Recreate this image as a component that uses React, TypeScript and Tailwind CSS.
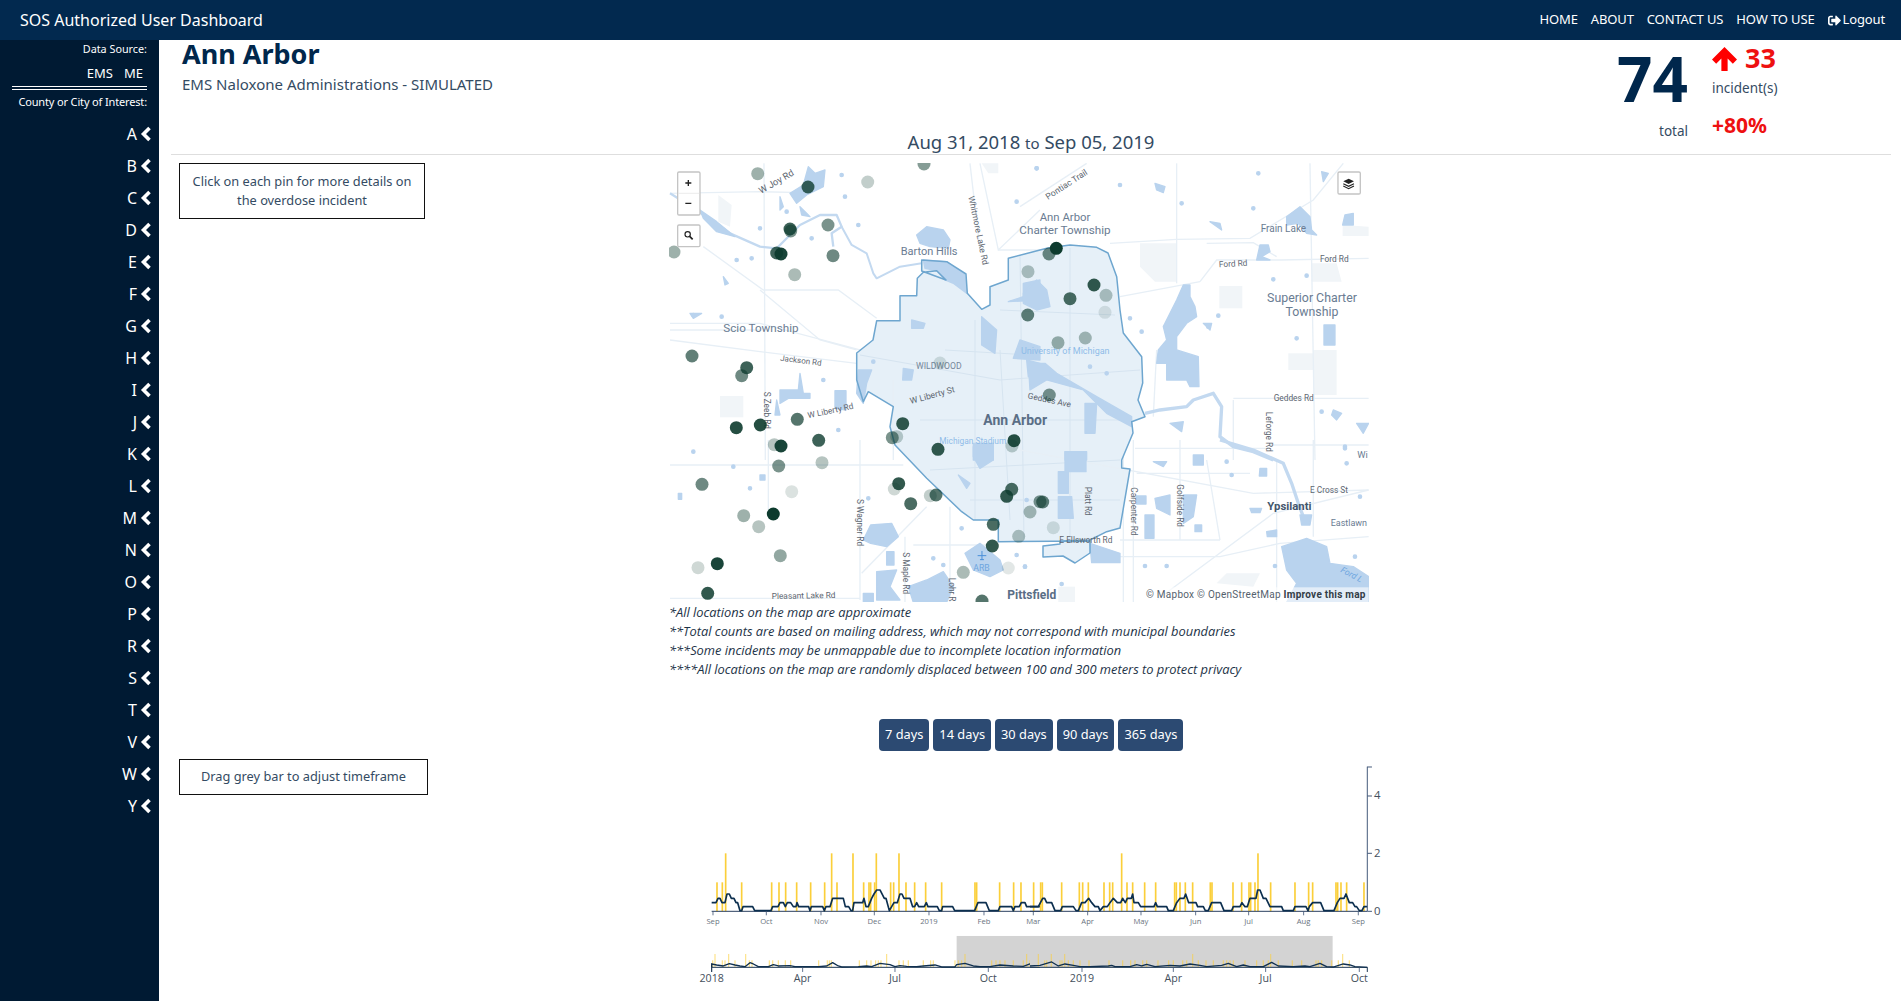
import { FaSignOutAlt } from 'react-icons/fa';

const LETTERS = ['A', 'B', 'C', 'D', 'E', 'F', 'G', 'H', 'I', 'J', 'K', 'L', 'M', 'N', 'O', 'P', 'R', 'S', 'T', 'V', 'W', 'Y'];

const NOTES = [
	'*All locations on the map are approximate',
	'**Total counts are based on mailing address, which may not correspond with municipal boundaries',
	'***Some incidents may be unmappable due to incomplete location information',
	'****All locations on the map are randomly displaced between 100 and 300 meters to protect privacy',
];

const RANGES = ['7 days', '14 days', '30 days', '90 days', '365 days'];

// the map and chart drawings are traced in page coordinates, so each group below has its own origin
const Z3 = 'translate(660 150) scale(0.3333)';
const Z4 = 'translate(1020 150) scale(0.3333)';
const Z5 = 'translate(660 440) scale(0.3333)';
const Z6 = 'translate(1020 440) scale(0.3333)';
const C7 = 'translate(690 760) scale(0.3333)';
const C8 = 'translate(1030 760) scale(0.3333)';

const CITY =
	'856.7,353 873,340 876.7,320.7 900,320.7 900,295.7 916.7,295.7 917.3,278.3 923.3,272.3 936.7,270.7 946,280 921.7,271 921.7,260 946.7,261.7 966,274 967.3,293.3 981.7,309.3 990,305 990,286.7 1008.3,280 1008.3,258.3 1040,250 1048,248 1070,245 1096.7,247.3 1108,253 1116.7,276.7 1120,310 1123.3,333 1141.7,356.7 1142.7,383 1138,400 1145,416.7 1131.7,421.7 1133,433 1121.7,460 1121.7,468 1130,469 1120,528 1106.7,531.7 1090,540 1060,541 1060,544 1043,546 1043,557 1063,556 1075,563 1090,553 1090,541 998.3,541.7 998.3,520 973.3,520 961.7,511.7 926.7,478.3 895,445 890,426.7 893.3,406.7 868.3,391.7 863.3,401.7 856.7,380';

const WATER: Record<string, string[]> = {
	[Z3]: [
		'120,180 170,215 225,260 170,245 130,205',
		'390,130 430,105 445,50 465,70 495,60 490,110 440,135 410,160',
		'420,170 445,195 450,200 425,195',
		'770,255 800,230 850,240 870,270 865,295 810,290 780,280',
		'790,330 860,335 915,375 920,430 880,400 855,390 830,362 795,355',
		'360,720 415,720 420,670 430,730 450,730 450,745 385,745 360,760',
		'350,750 360,795 345,795',
		'525,722 558,722 558,780 525,775',
		'1100,630 1140,640 1140,690 1105,680',
		'965,500 1010,540 1005,610 965,585',
		'1080,570 1140,590 1140,630 1060,625',
		'1090,400 1140,390 1140,450 1045,455 1090,440',
		'940,880 1000,880 1000,930 940,930',
		'595,660 635,660 620,700 610,760 590,730',
		'755,510 795,520 790,535 755,535',
		'730,655 760,660 755,690 728,690',
		'90,490 125,490 100,505',
		'360,140 370,170 360,180',
		'190,380 205,400 195,405',
	],
	[Z4]: [
		'490,405 510,405 510,440 525,470 530,500 500,520 470,560 470,600 535,620 537,710 510,710 500,690 440,690 440,640 410,640 415,600 440,570 430,530 470,450',
		'800,200 840,170 870,200 875,240 890,255 860,250 835,220 800,225',
		'975,195 1000,190 1000,225 968,225',
		'905,65 925,70 910,95',
		'720,285 745,285 750,305 725,320 750,330 710,330',
		'912,525 945,525 945,585 912,585',
		'25,640 75,640 110,670 230,740 335,800 335,830 260,790 190,720 80,690 30,720',
		'10,430 50,390 80,420 90,470 50,480 10,460',
		'195,760 230,760 225,850 195,850',
		'940,780 965,790 950,810 935,795',
		'1010,820 1046,820 1030,850',
		'135,905 200,905 200,930 135,930',
		'405,100 435,110 430,128 410,120',
		'570,215 600,220 605,240',
		'550,520 575,520 570,540',
		'450,820 490,815 485,845',
	],
	[Z5]: [
		'632,255 695,250 715,290 680,320 632,310 610,300',
		'680,335 702,335 702,375 680,375',
		'650,395 710,390 690,440 720,480 650,480',
		'745,440 800,420 850,395 880,440 860,487 760,487',
		'915,340 960,310 1020,360 1030,390 990,410 940,390',
		'610,460 640,460 640,487 610,487',
		'940,20 1000,10 1000,60 960,85 940,50',
		'300,105 315,105 315,120 300,120',
		'55,160 65,160 65,178 55,178',
		'895,105 930,130 920,145',
	],
	[Z6]: [
		'135,35 198,35 198,95 135,95',
		'115,95 145,95 145,160 115,160',
		'115,170 155,170 160,235 115,235',
		'375,225 402,225 402,295 375,295',
		'490,165 530,165 520,230 490,250',
		'405,175 450,165 450,225 410,205',
		'785,320 860,295 920,320 930,370 1000,380 1046,410 1046,487 800,487 830,430 800,390',
		'840,225 875,225 870,255 845,255',
		'690,205 725,205 720,218 695,218',
		'740,275 770,270 770,290 742,290',
		'210,310 300,340 300,368 215,368',
		'520,45 550,45 550,75 520,75',
		'400,65 440,65 430,80',
		'720,85 740,85 740,108 718,108',
		'525,255 545,255 545,275 525,275',
		'350,168 378,168 378,192 350,192',
	],
};

// small ponds scattered over the map
const PONDS: Record<string, [number, number][]> = {
	[Z3]: [[545, 75], [555, 140], [595, 225], [455, 265], [230, 330], [275, 325], [100, 495], [185, 500], [380, 185], [300, 235], [640, 635], [490, 690], [535, 840], [1070, 155], [1130, 55]],
	[Z4]: [[50, 55], [300, 105], [485, 160], [700, 175], [715, 70], [860, 377], [760, 388], [330, 505], [365, 545], [595, 497], [565, 530], [830, 565], [905, 785], [975, 890], [210, 650], [260, 670]],
	[Z5]: [[100, 35], [220, 80], [270, 145], [625, 175], [850, 375], [820, 355], [1095, 380], [1070, 345], [905, 265], [1100, 180]],
	[Z6]: [[620, 65], [635, 105], [975, 25], [980, 70], [15, 380], [375, 378], [440, 378], [1020, 170], [1005, 350], [125, 432], [765, 378]],
};

const PARKS: Record<string, string[]> = {
	[Z3]: ['180,738 250,738 250,802 180,802', '175,135 215,165 210,230 175,215', '965,40 1015,40 1015,70 985,70'],
	[Z4]: [
		'360,280 470,280 470,395 405,395 360,350',
		'598,408 667,408 667,475 598,475',
		'805,610 880,610 880,660 805,660',
		'880,600 950,600 950,735 880,735',
		'968,225 1046,230 1046,258 968,258',
		'875,340 950,340 965,395 875,395',
	],
	[Z6]: ['620,400 720,400 700,440 590,430', '115,440 165,440 165,487 115,487'],
};

const ROADS: Record<string, string[]> = {
	[Z3]: [
		'M30 130 L300 125 L430 128',
		'M312 40 L316 930',
		'M30 520 H300 L600 600',
		'M30 570 L300 605 L590 640',
		'M130 290 L310 420 L535 420 L650 505',
		'M300 420 L480 570 L590 600',
		'M930 40 L960 300',
		'M960 40 L1015 300 L1140 180',
		'M1015 300 L1140 300',
		'M700 690 V930',
		'M30 540 H300',
	],
	[Z4]: [
		'M270 280 L470 268 L690 265 L880 150 L970 40',
		'M470 40 V400',
		'M540 395 L590 330 L780 330 L1046 325',
		'M300 440 L540 395',
		'M870 40 L885 930',
		'M410 600 L400 800',
		'M640 745 H1046',
		'M750 885 H1046',
		'M345 895 H750',
		'M0 170 L200 40',
		'M640 750 V930',
		'M560 280 L700 278 L770 320',
	],
	[Z5]: ['M30 75 H730', 'M325 0 V220', 'M600 0 V480', 'M605 400 L800 200', 'M735 290 V487', 'M870 200 V487', 'M760 315 H1000', 'M30 475 H600'],
	[Z6]: [
		'M0 30 L700 160 L1046 150',
		'M340 0 V487',
		'M310 0 V487',
		'M300 350 H600 L780 310 L1046 290',
		'M410 480 L760 220 L1046 150',
		'M480 0 V300',
		'M300 300 H600',
		'M770 60 V487',
		'M880 0 V290',
		'M560 60 L600 300',
		'M350 100 H690',
	],
};

const CITY_ROADS = [
	'M860 355 L1000 380 L1140 370',
	'M945 350 L1030 355',
	'M975 320 V520',
	'M1000 350 L1010 520',
	'M1020 255 L1024 540',
	'M1070 248 V540',
	'M1000 310 L1115 315',
	'M920 420 L1130 420',
	'M930 470 L1120 460',
	'M970 500 L1120 500',
];

type Label = { t: string; x: number; y: number; s: number; r?: number; c?: string; b?: boolean; i?: boolean; a?: string };

const LABELS: Record<string, Label[]> = {
	[Z3]: [
		{ t: 'Scio Township', x: 190, y: 545, s: 35, c: '#6a7c92' },
		{ t: 'W Joy Rd', x: 303, y: 132, s: 28, r: -30 },
		{ t: 'Barton Hills', x: 722, y: 315, s: 33, c: '#6a7c92' },
		{ t: 'Whitmore Lake Rd', x: 925, y: 140, s: 26, r: 78 },
		{ t: 'Jackson Rd', x: 360, y: 632, s: 24, r: 7 },
		{ t: 'WILDWOOD', x: 768, y: 658, s: 26, c: '#76879a' },
		{ t: 'W Liberty St', x: 752, y: 762, s: 26, r: -15 },
		{ t: 'W Liberty Rd', x: 445, y: 805, s: 25, r: -12 },
		{ t: 'S Zeeb Rd', x: 312, y: 725, s: 25, r: 90 },
		{ t: 'Ann Arbor', x: 970, y: 825, s: 42, c: '#5a6e86', b: true },
		{ t: 'Michigan Stadium', x: 838, y: 882, s: 25, c: '#8fbce8' },
	],
	[Z4]: [
		{ t: 'Ann Arbor', x: 135, y: 212, s: 34, c: '#6a7c92', a: 'middle' },
		{ t: 'Charter Township', x: 135, y: 252, s: 35, c: '#6a7c92', a: 'middle' },
		{ t: 'University of Michigan', x: 3, y: 613, s: 27, c: '#8fbce8' },
		{ t: 'Geddes Ave', x: 22, y: 745, s: 25, r: 12 },
		{ t: 'Pontiac Trail', x: 84, y: 150, s: 26, r: -33 },
		{ t: 'Frain Lake', x: 722, y: 245, s: 30, c: '#6a7c92' },
		{ t: 'Ford Rd', x: 597, y: 352, s: 25, r: -3 },
		{ t: 'Ford Rd', x: 900, y: 337, s: 25 },
		{ t: 'Superior Charter', x: 876, y: 455, s: 37, c: '#6a7c92', a: 'middle' },
		{ t: 'Township', x: 876, y: 497, s: 37, c: '#6a7c92', a: 'middle' },
		{ t: 'Geddes Rd', x: 761, y: 753, s: 25 },
		{ t: 'Leforge Rd', x: 738, y: 785, s: 25, r: 90 },
		{ t: 'Wi', x: 1012, y: 925, s: 28, c: '#6a7c92' },
	],
	[Z5]: [
		{ t: 'S Wagner Rd', x: 590, y: 177, s: 25, r: 90 },
		{ t: 'S Maple Rd', x: 728, y: 337, s: 25, r: 90 },
		{ t: 'Lohr Rd', x: 868, y: 413, s: 25, r: 90 },
		{ t: 'ARB', x: 940, y: 392, s: 26, c: '#6ea6df' },
		{ t: 'Pleasant Lake Rd', x: 335, y: 477, s: 25, r: -1 },
		{ t: 'Pittsfield', x: 1042, y: 478, s: 36, c: '#5a6e86', b: true },
	],
	[Z6]: [
		{ t: 'Platt Rd', x: 195, y: 140, s: 25, r: 90 },
		{ t: 'Carpenter Rd', x: 333, y: 142, s: 25, r: 90 },
		{ t: 'Golfside Rd', x: 470, y: 133, s: 25, r: 90 },
		{ t: 'E Cross St', x: 870, y: 158, s: 25 },
		{ t: 'Ypsilanti', x: 742, y: 210, s: 34, c: '#44566c', b: true },
		{ t: 'Eastlawn', x: 932, y: 258, s: 27, c: '#6a7c92' },
		{ t: 'E Ellsworth Rd', x: 118, y: 308, s: 25 },
		{ t: 'Ford L', x: 960, y: 395, s: 26, r: 28, c: '#6ea6df', i: true },
	],
};

// x, y, opacity
const PINS: [number, number, number][] = [
	[757.7, 173.7, 0.4], [924, 164, 0.5], [867.7, 182, 0.25], [808, 187, 0.8], [790, 229, 0.8], [790.7, 231, 0.55],
	[828, 225, 0.55], [674, 252, 0.4], [776.7, 253, 0.8], [781, 254, 0.95], [833, 255.7, 0.6], [794.7, 274.7, 0.35],
	[1028, 271.7, 0.3], [1027.7, 315, 0.65], [692, 356, 0.65], [746.7, 367.7, 0.8], [741.7, 375.7, 0.6], [797.3, 419.3, 0.7],
	[736.3, 427.7, 0.9], [760.3, 425, 0.9], [902.7, 423.7, 0.85], [892.3, 437.7, 0.55], [896.7, 436.7, 0.25], [774.3, 444.7, 0.3],
	[781, 446, 0.95], [818.7, 440.3, 0.8], [938, 449.3, 0.85], [1014, 440.7, 0.9], [1012, 446, 0.25], [940, 363, 0.15],
	[1056.3, 248.3, 1], [1049, 254, 0.6], [1094, 285, 0.85], [1070, 298.7, 0.75], [1106, 295.3, 0.3], [1105, 312.3, 0.12],
	[1058, 342.7, 0.4], [1085.3, 338, 0.35], [1049.3, 395, 0.55], [822, 462.7, 0.3], [778.7, 466, 0.55], [702, 484.3, 0.6],
	[791.7, 491.7, 0.15], [898.7, 483.7, 0.85], [894.3, 489, 0.2], [910.7, 503.7, 0.75], [936, 495, 0.7], [930.3, 495.7, 0.25],
	[1011.7, 489.3, 0.75], [1006.7, 496.3, 0.85], [1030, 512, 0.35], [1040, 501.7, 0.55], [743.7, 515.7, 0.4], [773.3, 514, 1],
	[758.7, 526.7, 0.3], [993.3, 524.3, 0.75], [1018.7, 536.3, 0.3], [992.3, 546, 0.85], [780.3, 555.7, 0.45], [698, 567.7, 0.2],
	[717.3, 563.7, 0.95], [963.3, 572.3, 0.35], [1008.3, 568, 0.12], [707.7, 593.3, 0.85], [982, 601, 0.7], [1042.7, 502, 0.65],
	[1053.3, 527.7, 0.15],
];

const BARS_7_1 = [81, 97, 155, 245, 267, 287, 320, 362, 404, 441, 521, 537, 542, 554, 602, 611, 648, 674, 707, 755, 855, 860, 929, 971, 993, 1031];
const BARS_7_2 = [107, 425, 489, 559, 627];
const BARS_8_1 = [32, 37, 95, 148, 158, 175, 222, 239, 248, 291, 308, 344, 377, 434, 439, 450, 466, 488, 541, 546, 609, 635, 657, 662, 675, 722, 795, 836, 848, 918, 923, 933, 950, 1002];
const BARS_8_2 = [275, 684];

const LINE_7 =
	'65,428 78,428 84,415 90,415 96,428 105,428 111,402 118,402 124,415 132,415 138,428 143,428 150,452 155,452 159,440 188,440 194,452 243,452 248,440 264,440 270,428 280,428 286,440 292,428 302,428 310,440 318,440 321,428 326,440 356,440 360,452 364,440 398,440 403,452 408,440 420,440 428,415 460,415 466,440 476,440 483,452 488,452 492,428 518,428 522,415 528,440 535,440 545,415 552,402 560,390 570,390 583,415 588,415 598,452 605,440 612,428 622,428 630,402 636,402 642,415 660,415 668,440 674,440 680,428 686,440 703,440 709,428 714,440 742,440 748,452 755,452 758,440 788,440 794,452 854,452 864,428 888,428 898,452 925,452 930,440 965,440 970,452 975,440 988,440 994,428 1005,428 1010,440 1050,440';
const LINE_8 =
	'0,440 25,440 38,415 44,415 50,428 65,428 75,452 92,452 97,440 130,440 138,452 145,452 155,428 165,428 176,415 185,428 195,440 205,440 210,452 220,440 232,440 240,428 250,415 262,428 272,428 278,415 286,428 292,415 304,415 308,402 312,428 325,428 332,440 372,440 377,428 382,440 410,440 415,452 430,452 440,428 450,415 462,415 467,402 476,428 498,428 503,440 520,440 526,452 535,452 545,428 572,428 582,452 605,452 610,440 630,440 636,428 645,440 652,440 660,415 678,415 683,390 690,390 700,415 708,415 720,440 755,440 760,452 790,452 795,440 828,440 834,452 838,440 848,428 872,428 882,452 912,452 922,428 930,415 942,415 948,402 958,428 968,428 975,440 980,440 988,452 996,452 1002,440 1012,440';

const MINI_7_1 = [68, 97, 105, 135, 178, 186, 238, 248, 265, 286, 302, 386, 412, 418, 424, 508, 530, 543, 557, 565, 573, 627, 640, 655, 700, 722, 730, 795, 805, 815, 905, 918, 930, 945, 970, 1000, 1020, 1040];
const MINI_7_2 = [75, 116, 167, 590, 825, 1010];
const MINI_8_1 = [44, 50, 90, 96, 115, 130, 150, 177, 237, 278, 302, 315, 338, 350, 384, 416, 430, 458, 470, 505, 528, 550, 580, 590, 600, 610, 645, 680, 700, 715, 745, 787, 815, 858, 865, 875, 905, 925, 958];
const MINI_8_2 = [25, 64, 104, 488, 722, 938];

const MINI_LINE_7 =
	'65,622 65,612 80,615 100,618 118,611 135,615 150,618 165,620 180,608 190,612 205,620 235,620 250,614 265,618 300,617 315,620 385,620 410,618 428,608 445,618 455,621 505,620 530,618 545,620 570,610 600,614 615,620 630,617 650,619 680,620 700,618 735,615 755,621 795,621 800,614 825,610 850,618 870,620 900,620 930,615 970,618 1000,619 1020,612 1050,618';
const MINI_LINE_8 =
	'0,618 30,616 65,606 85,618 105,612 130,616 150,620 180,620 235,618 245,616 255,620 300,620 320,614 335,618 350,613 375,620 420,616 450,618 480,612 510,616 530,620 575,616 595,610 620,620 640,615 660,620 700,620 725,607 745,618 790,620 825,618 840,620 870,610 890,620 912,621 940,612 960,615 975,620 1012,622';

const TICKS_7: [string, number][] = [['Sep', 69], ['Oct', 229], ['Nov', 393], ['Dec', 553], ['2019', 717], ['Feb', 882], ['Mar', 1030]];
const TICKS_8: [string, number][] = [['Apr', 173], ['May', 333], ['Jun', 497], ['Jul', 656], ['Aug', 821], ['Sep', 985]];
const MINI_TICKS_7: [string, number][] = [['2018', 65], ['Apr', 338], ['Jul', 615], ['Oct', 895]];
const MINI_TICKS_8: [string, number][] = [['2019', 156], ['Apr', 430], ['Jul', 707], ['Oct', 988]];

const MapLabels = ({ items }: { items: Label[] }) => (
	<>
		{items.map((l) => (
			<text
				key={l.t + l.x}
				transform={`translate(${l.x} ${l.y}) rotate(${l.r ?? 0})`}
				fontSize={l.s}
				fill={l.c ?? '#5d6670'}
				fontWeight={l.b ? 700 : 400}
				fontStyle={l.i ? 'italic' : 'normal'}
				textAnchor={l.a === 'middle' ? 'middle' : 'start'}>
				{l.t}
			</text>
		))}
	</>
);

const MapPanel = () => (
	<svg viewBox="669 163 700 439" className="block w-[700px] h-[439px] font-['Roboto',sans-serif]">
		<polygon points={CITY} fill="#e6f0f8" />
		{[Z3, Z4, Z6].map((z) => (
			<g key={z} transform={z}>
				{(PARKS[z] ?? []).map((p) => (
					<polygon key={p} points={p} fill="#f1f5f8" />
				))}
			</g>
		))}
		{CITY_ROADS.map((d) => (
			<path key={d} d={d} fill="none" stroke="#d6e4f0" strokeWidth="1" />
		))}
		{[Z3, Z4, Z5, Z6].map((z) => (
			<g key={z} transform={z}>
				{ROADS[z].map((d) => (
					<path key={d} d={d} fill="none" stroke="#e7eff6" strokeWidth="4" />
				))}
			</g>
		))}
		<g transform={Z3} fill="none" stroke="#c3d9f0" strokeLinejoin="round">
			<path strokeWidth="7" d="M30 130 L110 180 L210 250 L300 290 L350 295 L375 270 L420 225 L480 195 L530 195 L545 230 L515 250 L520 290" />
			<path strokeWidth="6" d="M545 230 L575 285 L620 310 L640 370 L650 385 L720 350 L785 340" />
		</g>
		<g transform={Z4} fill="none" stroke="#c3d9f0" strokeLinejoin="round">
			<path strokeWidth="10" d="M375 790 L420 780 L500 770 L520 750 L580 730 L605 770 L600 860 L640 890 L700 905 L760 930" />
		</g>
		<g transform={Z6} fill="none" stroke="#c3d9f0" strokeLinejoin="round">
			<path strokeWidth="10" d="M600 0 L700 30 L790 70 L815 130 L835 190 L850 230" />
		</g>
		{Object.keys(WATER).map((z) => (
			<g key={z} transform={z} stroke="#b9d3ee" strokeWidth="4" strokeLinejoin="round">
				{WATER[z].map((p) => (
					<polygon key={p} points={p} fill="#b9d3ee" />
				))}
				{PONDS[z].map(([x, y]) => (
					<circle key={`${x}-${y}`} cx={x} cy={y} r="5" fill="#b9d3ee" />
				))}
			</g>
		))}
		<polygon points={CITY} fill="none" stroke="#6ea6cf" strokeWidth="1.5" strokeLinejoin="round" />
		{Object.keys(LABELS).map((z) => (
			<g key={z} transform={z}>
				<MapLabels items={LABELS[z]} />
			</g>
		))}
		{/* airport marker */}
		<g transform={Z5} stroke="#4a90d9" strokeWidth="3" fill="#4a90d9">
			<path d="M966 333 V360 M953 347 H979 M960 359 H972" />
		</g>
		{PINS.map(([x, y, o]) => (
			<circle key={`${x}-${y}`} cx={x} cy={y} r="6.5" fill="#0d3b2e" fillOpacity={o} />
		))}
		{/* attribution */}
		<g transform={Z6}>
			<rect x="370" y="442" width="676" height="45" fill="#ffffff" fillOpacity="0.6" />
			<text x="378" y="474" fontSize="30" fill="#55616d" letterSpacing="0.8">
				© Mapbox © OpenStreetMap <tspan fontWeight="700" fill="#333d47">Improve this map</tspan>
			</text>
		</g>
		{/* zoom controls */}
		<g transform={Z3} fill="#ffffff" stroke="#c4c4c4" strokeWidth="4">
			<rect x="53" y="66" width="67" height="129" rx="4" />
			<rect x="53" y="225" width="67" height="65" rx="4" />
			<path d="M55 130 H118" stroke="#e3e3e3" strokeWidth="2" />
			<path d="M76 99 H94 M85 90 V108 M76 160 H94" stroke="#222" strokeWidth="4" />
			<circle cx="83" cy="253" r="8" fill="none" stroke="#222" strokeWidth="3.5" />
			<path d="M89 259 L98 268" stroke="#222" strokeWidth="5" />
		</g>
		<g transform={Z4}>
			<rect x="954" y="66" width="67" height="66" rx="4" fill="#ffffff" stroke="#c4c4c4" strokeWidth="4" />
			<path d="M970 94 L986 86 L1002 94 L986 102 Z" fill="#222" />
			<path d="M970 101 L986 109 L1002 101 M970 108 L986 116 L1002 108" fill="none" stroke="#222" strokeWidth="3.5" />
		</g>
	</svg>
);

const Bars = ({ xs, top, bottom, width, opacity }: { xs: number[]; top: number; bottom: number; width: number; opacity?: number }) => (
	<>
		{xs.map((x) => (
			<rect key={x} x={x - width / 2} y={top} width={width} height={bottom - top} fill="#fbcf3a" fillOpacity={opacity ?? 1} />
		))}
	</>
);

const Ticks = ({ items, y1, y2, ty, size, fill }: { items: [string, number][]; y1: number; y2: number; ty: number; size: number; fill: string }) => (
	<>
		{items.map(([t, x]) => (
			<g key={t + x}>
				<path d={`M${x} ${y1} V${y2}`} stroke="#44597a" strokeWidth="2.5" />
				<text x={x} y={ty} fontSize={size} fill={fill} textAnchor="middle">
					{t}
				</text>
			</g>
		))}
	</>
);

const Chart = () => (
	<svg viewBox="669 760 740 241" className="block w-[740px] h-[241px] font-['Open_Sans',sans-serif]">
		<g transform={C7}>
			<rect x="800" y="528" width="250" height="94" fill="#d3d3d3" />
			<Bars xs={BARS_7_1} top={367} bottom={454} width={5} />
			<Bars xs={BARS_7_2} top={280} bottom={454} width={5} />
			<path d="M65 454 H1050" stroke="#2a3f5f" strokeWidth="3" />
			<polyline points={LINE_7} fill="none" stroke="#0c2f4f" strokeWidth="5" strokeLinejoin="round" />
			<Ticks items={TICKS_7} y1={454} y2={466} ty={491} size={23} fill="#6a7480" />
			<Bars xs={MINI_7_1} top={601} bottom={621} width={3.5} opacity={0.6} />
			<Bars xs={MINI_7_2} top={582} bottom={621} width={3.5} opacity={0.6} />
			<path d="M65 622 H1050" stroke="#1c3550" strokeWidth="3" />
			<polyline points={MINI_LINE_7} fill="none" stroke="#10304f" strokeWidth="4" strokeLinejoin="round" />
			<Ticks items={MINI_TICKS_7} y1={622} y2={636} ty={666} size={32} fill="#444f5c" />
			<path d="M65 610 V636" stroke="#1c3550" strokeWidth="3" />
		</g>
		<g transform={C8}>
			<rect x="0" y="528" width="908" height="94" fill="#d3d3d3" />
			<Bars xs={BARS_8_1} top={367} bottom={454} width={5} />
			<Bars xs={BARS_8_2} top={280} bottom={454} width={5} />
			<path d="M0 454 H1012" stroke="#2a3f5f" strokeWidth="3" />
			<polyline points={LINE_8} fill="none" stroke="#0c2f4f" strokeWidth="5" strokeLinejoin="round" />
			<Ticks items={TICKS_8} y1={454} y2={466} ty={491} size={23} fill="#6a7480" />
			<path d="M1012 454 V20 M1012 21 H1026 M1012 108 H1026 M1012 280 H1026 M1012 454 H1026" fill="none" stroke="#44597a" strokeWidth="3" />
			<text x="1042" y="118" fontSize="34" fill="#444f5c" textAnchor="middle">4</text>
			<text x="1042" y="291" fontSize="34" fill="#444f5c" textAnchor="middle">2</text>
			<text x="1042" y="465" fontSize="34" fill="#444f5c" textAnchor="middle">0</text>
			<Bars xs={MINI_8_1} top={601} bottom={621} width={3.5} opacity={0.6} />
			<Bars xs={MINI_8_2} top={582} bottom={621} width={3.5} opacity={0.6} />
			<path d="M0 622 H1012" stroke="#1c3550" strokeWidth="3" />
			<polyline points={MINI_LINE_8} fill="none" stroke="#10304f" strokeWidth="4" strokeLinejoin="round" />
			<Ticks items={MINI_TICKS_8} y1={622} y2={636} ty={666} size={32} fill="#444f5c" />
			<path d="M1012 622 V636" stroke="#1c3550" strokeWidth="3" />
		</g>
	</svg>
);

const Chevron = () => (
	<svg viewBox="0 0 12 16" className="w-[12px] h-[16px] fill-none stroke-white stroke-[3.6]">
		<path d="M9.5 2 L3.5 8 L9.5 14" />
	</svg>
);

const Sidebar = () => (
	<aside className="w-[159px] shrink-0 bg-[#001a33] text-white flex flex-col items-end pr-[12px]">
		<div className="text-[10.8px] leading-[16px] mt-[1px]">Data Source:</div>
		<div className="flex gap-[11px] text-[13px] leading-[18px] mt-[7px] pr-[4px]">
			<span>EMS</span>
			<span>ME</span>
		</div>
		<div className="w-[135px] h-[4px] border-y border-white mt-[4px]" />
		<div className="text-[11px] leading-[16px] mt-[4px] tracking-[-0.15px]">County or City of Interest:</div>
		<ul className="flex flex-col mt-[8px] -mr-[5px]">
			{LETTERS.map((l) => (
				<li key={l} className="h-[32px] flex items-center justify-end gap-[3px] text-[16px]">
					<span>{l}</span>
					<Chevron />
				</li>
			))}
		</ul>
	</aside>
);

export default function App() {
	return (
		<div className="h-screen overflow-hidden flex flex-col bg-white font-['Noto_Sans',sans-serif] text-[#344b63]">
			<nav className="h-[40px] shrink-0 bg-[#02294f] text-white flex items-center justify-between pl-[20px] pr-[16px]">
				<span className="text-[16px]">SOS Authorized User Dashboard</span>
				<div className="flex items-center gap-[13px] text-[13px] tracking-[-0.13px]">
					<span>HOME</span>
					<span>ABOUT</span>
					<span>CONTACT US</span>
					<span>HOW TO USE</span>
					<span className="flex items-center gap-[2px]">
						<FaSignOutAlt className="text-[13px]" />
						Logout
					</span>
				</div>
			</nav>
			<div className="flex flex-1 min-h-0">
				<Sidebar />
				<main className="flex-1 min-w-0">
					<header className="ml-[12px] mr-[10px] border-b border-[#dedede] h-[115px]">
						<div className="flex justify-between h-[100px]">
							<div className="pl-[11px]">
								<h1 className="text-[27px] leading-[28px] font-bold text-[#00274c]">Ann Arbor</h1>
								<p className="text-[15px] leading-[20px] mt-[6px]">EMS Naloxone Administrations - SIMULATED</p>
							</div>
							<div className="flex mr-[89px]">
								<div className="w-[74px] flex flex-col items-end">
									<span className="text-[62px] leading-[70px] font-bold text-[#00274c] mt-[3px]">74</span>
									<span className="text-[13.5px] leading-[18px] mt-[9px]">total</span>
								</div>
								<div className="w-[90px] ml-[24px]">
									<div className="flex items-center gap-[8px] text-[#ee1111] font-bold text-[27px] leading-[30px] mt-[3px]">
										<svg viewBox="0 0 24 24" className="w-[25px] h-[25px] fill-[#ff0000]">
											<path d="M12 1 L24 13 L20 17 L15 12 V24 H9 V12 L4 17 L0 13 Z" />
										</svg>
										33
									</div>
									<div className="text-[13.5px] leading-[18px] mt-[6px]">incident(s)</div>
									<div className="text-[#ee1111] font-bold text-[21px] leading-[26px] mt-[15px]">+80%</div>
								</div>
							</div>
						</div>
						<div className="text-center text-[18.5px] leading-[24px] -mt-[10px]">
							Aug 31, 2018 <span className="text-[15px]">to</span> Sep 05, 2019
						</div>
					</header>
					<section className="grid grid-cols-[490px_740px] pl-[20px] pt-[8px]">
						<div className="w-[246px] h-[56px] border border-[#111111] text-[12.8px] leading-[19px] text-center flex items-center justify-center px-[8px]">
							Click on each pin for more details on the overdose incident
						</div>
						<div>
							<MapPanel />
							<div className="mt-[1px] text-[12.85px] leading-[19px] italic text-[#1d3347] font-['Open_Sans',sans-serif]">
								{NOTES.map((n) => (
									<div key={n}>{n}</div>
								))}
							</div>
							<div className="flex gap-[4px] ml-[210px] mt-[40px]">
								{RANGES.map((r) => (
									<button key={r} className="h-[32px] px-[6px] rounded-[4px] bg-[#2c4a72] text-white text-[12.8px]">
										{r}
									</button>
								))}
							</div>
						</div>
						<div className="w-[249px] h-[36px] mt-[8px] border border-[#111111] text-[12.8px] flex items-center justify-center">
							Drag grey bar to adjust timeframe
						</div>
						<div className="mt-[9px]">
							<Chart />
						</div>
					</section>
				</main>
			</div>
		</div>
	);
}
